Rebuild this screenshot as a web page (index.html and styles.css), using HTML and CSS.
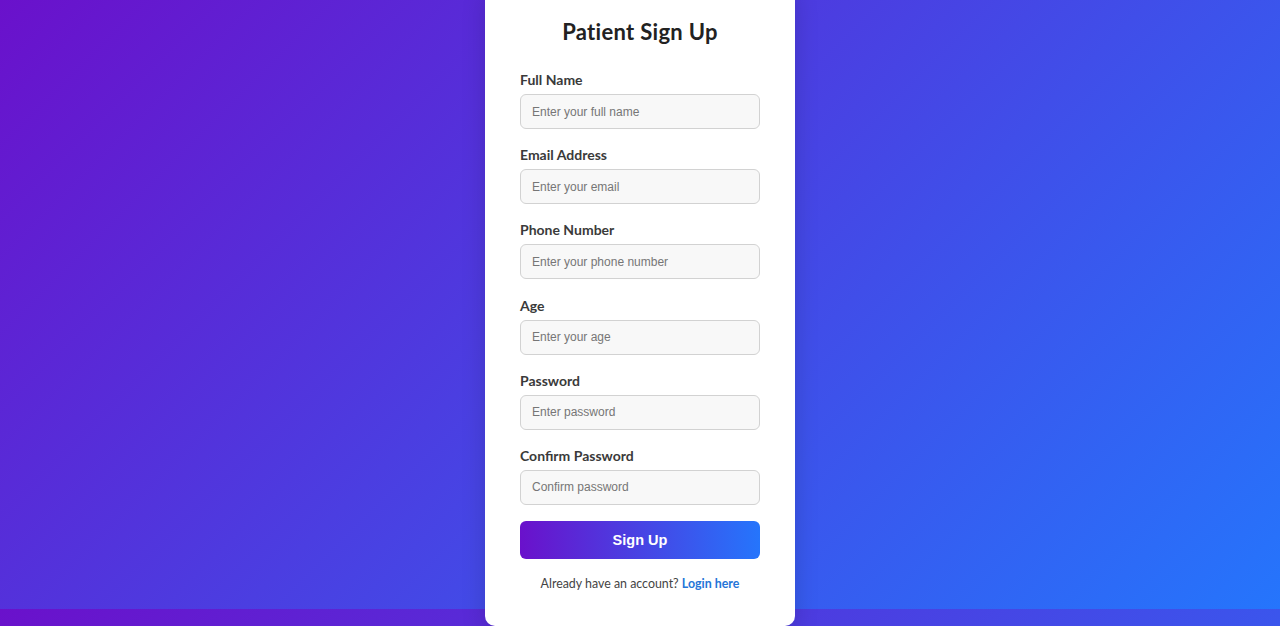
FILE: index.html
```html
<!DOCTYPE html>
<html lang="en">
<head>
<meta charset="utf-8">
<title>Patient Sign Up</title>
<link rel="stylesheet" href="styles.css">
</head>
<body>
  <div class="card">
    <h2 class="title">Patient Sign Up</h2>
    <form class="form">
      <div class="group">
        <label class="label">Full Name</label>
        <input class="input" type="text" placeholder="Enter your full name">
      </div>
      <div class="group">
        <label class="label">Email Address</label>
        <input class="input" type="email" placeholder="Enter your email">
      </div>
      <div class="group">
        <label class="label">Phone Number</label>
        <input class="input" type="tel" placeholder="Enter your phone number">
      </div>
      <div class="group">
        <label class="label">Age</label>
        <input class="input" type="number" placeholder="Enter your age">
      </div>
      <div class="group">
        <label class="label">Password</label>
        <input class="input" type="password" placeholder="Enter password">
      </div>
      <div class="group">
        <label class="label">Confirm Password</label>
        <input class="input" type="password" placeholder="Confirm password">
      </div>
      <button class="btn" type="button">Sign Up</button>
    </form>
    <p class="footer">Already have an account? <a class="link" href="#">Login here</a></p>
  </div>
</body>
</html>
```
FILE: styles.css
```css
html {
  background: linear-gradient(135deg, #6a11cb 0%, #2575fc 100%);
  background-size: 100% 609px;
  background-repeat: repeat-y;
}
body {
  margin: 0;
  height: 626px;
  display: flex;
  align-items: flex-start;
  justify-content: center;
  font-family: "Lato", "Open Sans", sans-serif;
}
.card {
  width: 310px;
  box-sizing: border-box;
  height: 643px;
  margin-top: -17px;
  flex-shrink: 0;
  background: #ffffff;
  border-radius: 10px;
  padding: 36px 35px 33px;
  box-shadow: 0 8px 24px rgba(0, 0, 0, 0.15);
}
.title {
  margin: 0 0 25px;
  font-size: 22px;
  line-height: 26px;
  font-weight: 700;
  color: #222222;
  text-align: center;
  letter-spacing: 0.3px;
}
.form {
  margin: 0;
  display: flex;
  flex-direction: column;
}
.group {
  display: flex;
  flex-direction: column;
  margin-bottom: 16.2px;
}
.label {
  font-size: 14px;
  line-height: 20px;
  font-weight: 700;
  color: #3a3a3a;
  margin-bottom: 4px;
}
.input {
  height: 35px;
  box-sizing: border-box;
  padding: 0 11px;
  border: 1px solid #d2d2d2;
  border-radius: 6px;
  background: #f8f8f8;
  font-family: "Liberation Sans", Arial, sans-serif;
  font-size: 12px;
  color: #333;
}
.input::placeholder {
  color: #767676;
}
.btn {
  height: 38px;
  border: none;
  border-radius: 6px;
  background: linear-gradient(90deg, #6a11cb 0%, #2575fc 100%);
  color: #ffffff;
  font-family: "Liberation Sans", Arial, sans-serif;
  font-size: 14.5px;
  font-weight: 700;
}
.footer {
  margin: 16px 0 0;
  font-size: 12.4px;
  line-height: 18px;
  color: #444;
  text-align: center;
}
.link {
  color: #2575d8;
  font-weight: 700;
  text-decoration: none;
}
```
